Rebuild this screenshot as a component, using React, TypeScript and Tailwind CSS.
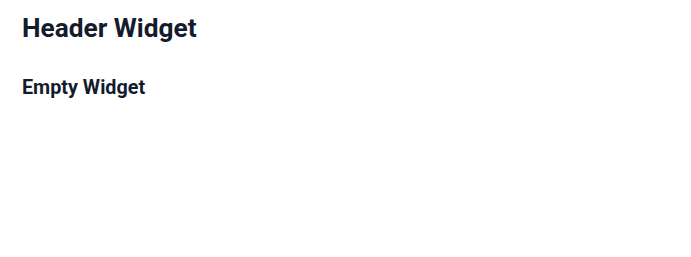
export default function App() {
  return (
    <div className="min-h-screen bg-white px-[22px] pt-[12px] text-[#141b2d]" style={{ fontFamily: "Roboto, sans-serif" }}>
      <h1 className="text-[26.25px] font-bold leading-[32px]">Header Widget</h1>
      <h2 className="mt-[30px] text-[19.75px] font-bold leading-[28px]">Empty Widget</h2>
    </div>
  );
}
